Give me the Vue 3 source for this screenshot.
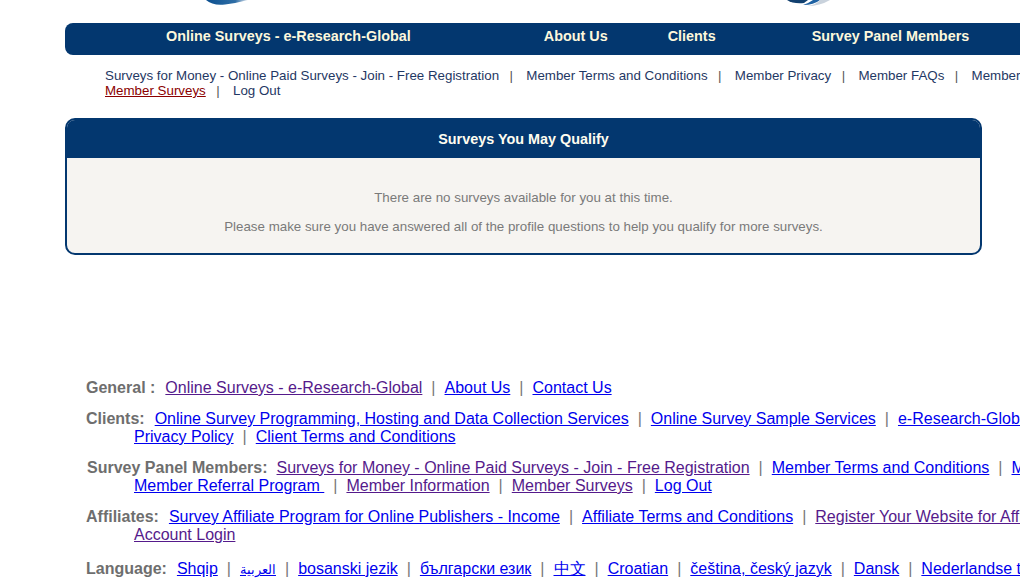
<script setup>
const general = [
  { t: 'Online Surveys - e-Research-Global', v: true },
  { t: 'About Us' },
  { t: 'Contact Us' },
]
const clients = [
  { t: 'Online Survey Programming, Hosting and Data Collection Services' },
  { t: 'Online Survey Sample Services' },
  { t: 'e-Research-Global Privacy Policy' },
]
const clients2 = [{ t: 'Privacy Policy' }, { t: 'Client Terms and Conditions' }]
const panel = [
  { t: 'Surveys for Money - Online Paid Surveys - Join - Free Registration', v: true },
  { t: 'Member Terms and Conditions' },
  { t: 'Member Privacy' },
]
const panel2 = [
  { t: 'Member Referral Program ' },
  { t: 'Member Information', v: true },
  { t: 'Member Surveys', v: true },
  { t: 'Log Out' },
]
const aff = [
  { t: 'Survey Affiliate Program for Online Publishers - Income' },
  { t: 'Affiliate Terms and Conditions' },
  { t: 'Register Your Website for Affiliate Program', v: true },
]
const lang = ['Shqip', 'العربية', 'bosanski jezik', 'български език', '中文', 'Croatian', 'čeština, český jazyk', 'Dansk', 'Nederlandse taal']
const top = ['Surveys for Money - Online Paid Surveys - Join - Free Registration', 'Member Terms and Conditions', 'Member Privacy', 'Member FAQs', 'Member Referral Program']
</script>

<template>
  <div class="page">
    <div class="logos">
      <svg class="logo" width="60" height="7" viewBox="0 0 60 7">
        <defs>
          <linearGradient id="fade" x1="0" x2="1" y1="0" y2="0">
            <stop offset="0" stop-color="#0b4f8f" />
            <stop offset="0.7" stop-color="#2f6ea6" />
            <stop offset="1" stop-color="#dfe6ee" />
          </linearGradient>
        </defs>
        <path d="M5 0 Q12 6 24 4.5 Q36 3 47 0 Z" fill="url(#fade)" />
      </svg>
      <svg class="logo two" width="60" height="7" viewBox="0 0 60 7">
        <path d="M11 0 Q17 4 28 3 L32 0 Z" fill="#12406f" />
        <path d="M27 5 Q38 5 44 0 L37 0 Q33 3 27 5 Z" fill="#1f62a3" />
        <path d="M44 0 Q40 5 31 6 Q44 6 54 0 Z" fill="#c9d2dc" />
      </svg>
    </div>

    <nav class="nav">
      <a class="n1">Online Surveys - e-Research-Global</a>
      <a class="n2">About Us</a>
      <a class="n3">Clients</a>
      <a class="n4">Survey Panel Members</a>
    </nav>

    <div class="sub">
      <div class="subline">
        <template v-for="(t, i) in top" :key="t">
          <a>{{ t }}</a><span v-if="i < top.length - 1" class="sep">|</span>
        </template>
      </div>
      <div class="subline">
        <a class="active">Member Surveys</a><span class="sep">|</span><a>Log Out</a>
      </div>
    </div>

    <section class="box">
      <h2>Surveys You May Qualify</h2>
      <div class="body">
        <p>There are no surveys available for you at this time.</p>
        <p>Please make sure you have answered all of the profile questions to help you qualify for more surveys.</p>
      </div>
    </section>

    <footer class="foot">
      <div class="row r-general">
        <b>General :</b>
        <template v-for="(l, i) in general" :key="l.t"><span v-if="i" class="bar">|</span><a :class="{ v: l.v }">{{ l.t }}</a></template>
      </div>
      <div class="row r-clients">
        <div><b>Clients:</b>
          <template v-for="(l, i) in clients" :key="l.t"><span v-if="i" class="bar">|</span><a>{{ l.t }}</a></template>
        </div>
        <div class="cont">
          <template v-for="(l, i) in clients2" :key="l.t"><span v-if="i" class="bar">|</span><a>{{ l.t }}</a></template>
        </div>
      </div>
      <div class="row r-panel">
        <div><b>Survey Panel Members:</b>
          <template v-for="(l, i) in panel" :key="l.t"><span v-if="i" class="bar">|</span><a :class="{ v: l.v }">{{ l.t }}</a></template>
        </div>
        <div class="cont">
          <template v-for="(l, i) in panel2" :key="l.t"><span v-if="i" class="bar">|</span><a :class="{ v: l.v }">{{ l.t }}</a></template>
        </div>
      </div>
      <div class="row r-aff">
        <div><b>Affiliates:</b>
          <template v-for="(l, i) in aff" :key="l.t"><span v-if="i" class="bar">|</span><a :class="{ v: l.v }">{{ l.t }}</a></template>
        </div>
        <div class="cont"><a class="v">Account Login</a></div>
      </div>
      <div class="row r-lang">
        <b>Language:</b>
        <template v-for="(l, i) in lang" :key="l"><span v-if="i" class="bar">|</span><a :class="{ ar: i === 1 }">{{ l }}</a></template>
      </div>
    </footer>
  </div>
</template>

<style>
html, body { margin: 0; background: #fff; overflow: hidden; }
</style>

<style scoped>
.page {
  width: 1020px;
  height: 578px;
  overflow: hidden;
  font-family: "Liberation Sans", Arial, sans-serif;
  box-sizing: border-box;
  padding-left: 65px;
}
.logos { height: 23px; position: relative; margin-left: -65px; }
.logo { position: absolute; top: 0; left: 201px; }
.logo.two { left: 776px; }
.nav {
  width: 1100px;
  height: 32px;
  box-sizing: border-box;
  padding-bottom: 6px;
  background: #03376f;
  border-radius: 8px;
  display: flex;
  align-items: center;
  font-size: 14.4px;
  font-weight: bold;
  color: #fdf8dc;
  white-space: nowrap;
}
.nav a { display: block; }
.n1 { margin-left: 101px; }
.n2 { margin-left: 133px; }
.n3 { margin-left: 60px; }
.n4 { margin-left: 96px; }
.sub {
  margin-top: 13px;
  margin-left: 40px;
  width: 1100px;
  font-size: 13.33px;
  line-height: 15px;
  color: #1f3864;
  white-space: nowrap;
}
.sub a { color: #1f3864; }
.sub .active { color: #8b0000; text-decoration: underline; }
.sep { margin: 0 13.3px 0 10.5px; color: #555; }
.box {
  margin-top: 20px;
  width: 917px;
  height: 137px;
  box-sizing: border-box;
  border: 2px solid #03376f;
  border-radius: 10px;
  overflow: hidden;
  background: #f6f4f1;
}
.box h2 {
  margin: 0;
  height: 38px;
  background: #03376f;
  color: #fffdf0;
  font-size: 14.4px;
  font-weight: bold;
  text-align: center;
  line-height: 38px;
}
.body {
  text-align: center;
  color: #7a7a7a;
  font-size: 13.33px;
  padding-top: 33px;
}
.body p { margin: 0 0 15px; line-height: 14px; }
.foot {
  margin-top: 124px;
  margin-left: 21px;
  width: 1400px;
  font-size: 16px;
  line-height: 18px;
  white-space: nowrap;
}
.row { margin-bottom: 13px; }
.row b { color: #6e6e6e; margin-right: 10px; }
.r-panel b { margin-right: 9px; }
.row a { color: #0000ee; text-decoration: underline; }
.row a.v { color: #551a8b; }
.row a.ar { font-size: 12.5px; font-weight: 300; }
.bar { color: #777; margin: 0 9px; }
.cont { margin-left: 48px; }
.r-panel { margin-left: 1px; }
.r-panel .cont { margin-left: 47px; }
.r-lang { margin-top: 16px; }
</style>
